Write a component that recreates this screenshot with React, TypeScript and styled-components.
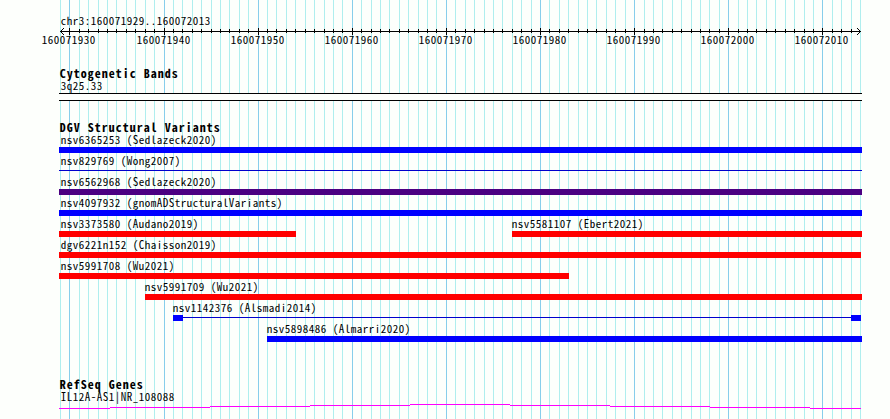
import React from 'react';
import styled, { createGlobalStyle } from 'styled-components';

type Glyph = 'bar' | 'line' | 'split';

interface Variant {
  label: string;
  start: number;
  end: number;
  color: string;
  glyph?: Glyph;
}

const TRACK_LEFT = 59;
const BASES = 85;
const FIRST_BASE = 160071929;

const BLUE = '#0000ff';
const RED = '#ff0000';
const INDIGO = '#4b0082';

// one entry per row, features in a row are ordered left to right
const variantRows: Variant[][] = [
  [{ label: 'nsv6365253 (Sedlazeck2020)', start: 59, end: 862, color: BLUE }],
  [{ label: 'nsv829769 (Wong2007)', start: 59, end: 862, color: '#0000cd', glyph: 'line' }],
  [{ label: 'nsv6562968 (Sedlazeck2020)', start: 59, end: 862, color: INDIGO }],
  [{ label: 'nsv4097932 (gnomADStructuralVariants)', start: 59, end: 862, color: BLUE }],
  [
    { label: 'nsv3373580 (Audano2019)', start: 59, end: 296, color: RED },
    { label: 'nsv5581107 (Ebert2021)', start: 512, end: 862, color: RED },
  ],
  [{ label: 'dgv6221n152 (Chaisson2019)', start: 59, end: 861, color: RED }],
  [{ label: 'nsv5991708 (Wu2021)', start: 59, end: 569, color: RED }],
  [{ label: 'nsv5991709 (Wu2021)', start: 145, end: 862, color: RED }],
  [{ label: 'nsv1142376 (Alsmadi2014)', start: 173, end: 861, color: BLUE, glyph: 'split' }],
  [{ label: 'nsv5898486 (Almarri2020)', start: 267, end: 862, color: BLUE }],
];

const ticks = Array.from({ length: BASES + 1 }, (_, i) => ({
  base: FIRST_BASE + i,
  x: Math.round(60 + (i * 800) / BASES),
  major: (FIRST_BASE + i) % 10 === 0,
}));

const majorTicks = ticks.filter((t) => t.major);

const GridLines = () => (
  <GridLayer width="890" height="419" shapeRendering="crispEdges">
    {ticks.map((t) => (
      <rect
        key={t.base}
        x={t.x}
        y={0}
        width={1}
        height={419}
        fill={t.major ? '#87ceeb' : '#afeeee'}
      />
    ))}
  </GridLayer>
);

const Ruler = () => (
  <RulerBox>
    <RegionName>chr3:160071929..160072013</RegionName>
    <Axis width="890" height="7" shapeRendering="crispEdges">
      <rect x={60} y={3} width={801} height={1} />
      {ticks.slice(1, -1).map((t) => (
        <rect
          key={t.base}
          x={t.x}
          y={t.major ? 0 : 1}
          width={1}
          height={t.major ? 7 : 4}
        />
      ))}
      {[1, 2, 3].map((d) => (
        <React.Fragment key={d}>
          <rect x={60 + d} y={3 - d} width={1} height={1} />
          <rect x={60 + d} y={3 + d} width={1} height={1} />
          <rect x={860 - d} y={3 - d} width={1} height={1} />
          <rect x={860 - d} y={3 + d} width={1} height={1} />
        </React.Fragment>
      ))}
    </Axis>
    <TickLabels>
      {majorTicks.map((t, i) => (
        <TickLabel key={t.base} $gap={t.x - 28 - (i ? majorTicks[i - 1].x + 26 : 0)}>
          {t.base}
        </TickLabel>
      ))}
    </TickLabels>
  </RulerBox>
);

const FeatureGlyph = ({ variant }: { variant: Variant }) => {
  if (variant.glyph === 'line') return <ThinLine $color={variant.color} />;
  if (variant.glyph === 'split') {
    return (
      <SplitGlyph>
        <EndBox $color={variant.color} />
        <Connector />
        <EndBox $color={variant.color} />
      </SplitGlyph>
    );
  }
  return <Bar $color={variant.color} />;
};

const VariantRow = ({ variants }: { variants: Variant[] }) => (
  <Row>
    {variants.map((v, i) => (
      <Feature
        key={v.label}
        $gap={v.start - (i ? variants[i - 1].end : TRACK_LEFT)}
        $width={v.end - v.start}
      >
        <Label $shift={v.start === TRACK_LEFT ? 1 : -1}>{v.label}</Label>
        <FeatureGlyph variant={v} />
      </Feature>
    ))}
  </Row>
);

const GeneTrace = () => (
  <Trace width="803" height="5" shapeRendering="crispEdges">
    {[4, 3, 2, 1, 0, 1, 2, 3, 4].map((y, i) => {
      const from = i === 0 ? 0 : 51 + (i - 1) * 100;
      const to = i === 8 ? 802 : 51 + i * 100;
      return <rect key={i} x={from} y={y} width={to - from} height={1} fill="#ff00ff" />;
    })}
  </Trace>
);

const App: React.FC = () => (
  <Page>
    <GlobalStyle />
    <GridLines />
    <Content>
      <Ruler />
      <Track $height={54}>
        <Heading>Cytogenetic Bands</Heading>
        <Label $shift={1}>3q25.33</Label>
        <Band />
      </Track>
      <Track $height={257}>
        <Heading>DGV Structural Variants</Heading>
        {variantRows.map((row) => (
          <VariantRow key={row[0].label} variants={row} />
        ))}
      </Track>
      <Track $height={45}>
        <Heading>RefSeq Genes</Heading>
        <Label $shift={1}>IL12A-AS1|NR_108088</Label>
        <GeneTrace />
      </Track>
    </Content>
  </Page>
);

const GlobalStyle = createGlobalStyle`
  body {
    margin: 0;
    background: #fdfffc;
    overflow: hidden;
  }
`;

const Page = styled.div`
  position: relative;
  width: 890px;
  height: 419px;
  overflow: hidden;
  color: #000;
  font-family: 'Noto Sans CJK JP', 'Liberation Mono', monospace;
  font-feature-settings: 'hwid';
  font-size: 11px;
  letter-spacing: 0.5px;
  line-height: 15px;
  text-indent: 0.75px;
  white-space: nowrap;
`;

const GridLayer = styled.svg`
  position: absolute;
  inset: 0;
`;

const Content = styled.div`
  position: relative;
  display: flex;
  flex-direction: column;
`;

const RulerBox = styled.div`
  display: flex;
  flex-direction: column;
  height: 63px;
  box-sizing: border-box;
  padding-top: 13px;
`;

const RegionName = styled.div`
  height: 15px;
  padding-left: 60px;
`;

const Axis = styled.svg`
  display: block;
  flex: none;
`;

const TickLabels = styled.div`
  display: flex;
  margin-top: -3px;
`;

const TickLabel = styled.span<{ $gap: number }>`
  flex: none;
  width: 54px;
  margin-left: ${({ $gap }) => $gap}px;
`;

const Track = styled.section<{ $height: number }>`
  height: ${({ $height }) => $height}px;
  padding-left: ${TRACK_LEFT}px;
`;

const Heading = styled.h2`
  height: 15px;
  margin: 0;
  font-size: 12px;
  font-weight: 700;
  letter-spacing: 1px;
  line-height: 20px;
`;

const Label = styled.div<{ $shift: number }>`
  height: 15px;
  margin-left: ${({ $shift }) => $shift}px;
`;

const Band = styled.div`
  width: 803px;
  height: 8px;
  box-sizing: border-box;
  border: solid #000;
  border-width: 1px 0;
  background: #fdfffc;
`;

const Row = styled.div`
  display: flex;
  height: 21px;
`;

const Feature = styled.div<{ $gap: number; $width: number }>`
  flex: none;
  width: ${({ $width }) => $width}px;
  margin-left: ${({ $gap }) => $gap}px;
`;

const Bar = styled.div<{ $color: string }>`
  height: 6px;
  background: ${({ $color }) => $color};
`;

const ThinLine = styled.div<{ $color: string }>`
  height: 1px;
  margin-top: 2px;
  background: ${({ $color }) => $color};
`;

const SplitGlyph = styled.div`
  display: flex;
  height: 6px;
`;

const EndBox = styled.div<{ $color: string }>`
  width: 10px;
  background: ${({ $color }) => $color};
`;

const Connector = styled.div`
  flex: 1;
  height: 1px;
  margin-top: 2px;
  background: #0000cd;
`;

const Trace = styled.svg`
  display: block;
`;

export default App;
